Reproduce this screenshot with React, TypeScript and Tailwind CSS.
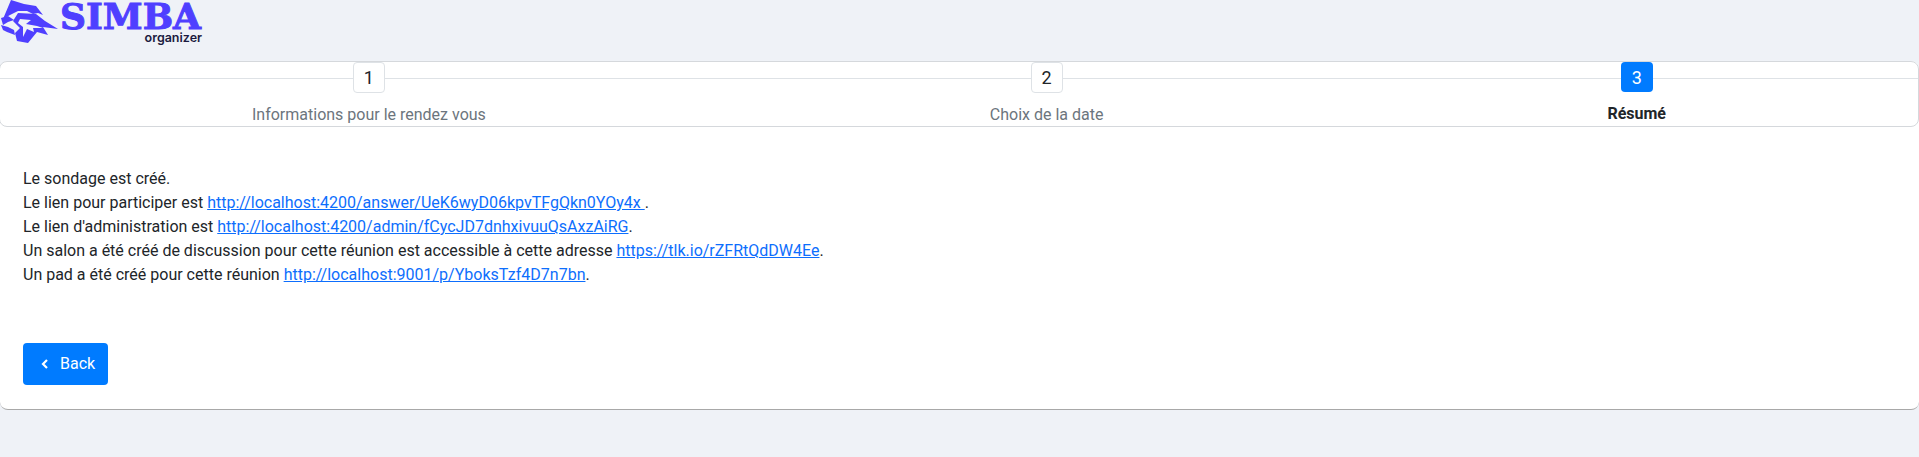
const Lion = () => (
  <svg width="60" height="44" viewBox="0 0 60 44" className="shrink-0">
    <path fill="#4f3fff" d="M11 0 L24 4 L36 6 L43 15 L38 13 L33 14 L27 11 L18 11 L10 15 L3 19 Z" />
    <path
      fill="#4f3fff"
      d="M18 13 L36 14 L45 21 L58 29 L43 27 L48 35 L37 32 L28 43 L17 41 L15 33 L20 28 L13 21 Z"
    />
    <path fill="#eff2f7" d="M20 19 L31 20 L26 24 L37 26 L43 28 L33 28 L34 32 L27 29 L23 37 L23 27 L18 23 Z" />
    <path fill="#4f3fff" d="M1 18 L8 16 L14 20 L8 22 L3 25 Z" />
    <path fill="#4f3fff" d="M1 25 L8 27 L14 30 L15 35 L7 32 L3 30 Z" />
  </svg>
);

const Logo = () => (
  <div className="flex h-[43px] mb-[18px]">
    <Lion />
    <div className="ml-[2px] flex flex-col items-end w-[140px]">
      <div className="pr-px font-['DejaVu_Serif',serif] font-bold text-[36px] leading-[32px] [-webkit-text-stroke:1px_#4f3fff] text-[#4f3fff]">SIMBA</div>
      <div className="font-['Inter',sans-serif] font-semibold text-[12.5px] leading-[11px] text-[#1b1b3f]">organizer</div>
    </div>
  </div>
);

const steps = [
  { n: 1, label: "Informations pour le rendez vous" },
  { n: 2, label: "Choix de la date" },
  { n: 3, label: "Résumé", active: true },
];

const Link = ({ children }: { children: string }) => (
  <a href="#" className="text-[#0d6efd] underline">{children}</a>
);

export default function App() {
  return (
    <div className="h-[457px] bg-[#eff2f7] font-['Roboto',sans-serif] text-base text-[#212529] overflow-hidden">
      <Logo />
      <div className="bg-white rounded-lg border-b border-[#a8a8a8] h-[349px]">
        {/* steps */}
        <div className="relative -ml-px flex justify-around h-[66px] border border-[#d5d8dc] rounded-lg">
          <div className="absolute left-0 right-0 top-[16px] border-t border-[#dee2e6]" />
          {steps.map((s) => (
            <div key={s.n} className="relative flex flex-col items-center">
              <div
                className={
                  s.active
                    ? "w-8 h-8 pt-px flex items-center justify-center rounded bg-[#007bff] text-white text-lg"
                    : "w-8 h-8 pt-px flex items-center justify-center rounded border border-[#dee2e6] bg-white text-lg"
                }
              >
                {s.n}
              </div>
              <div className={s.active ? "mt-[10px] leading-[24px] font-bold text-[#212529]" : "mt-[10px] leading-[24px] text-[#6c757d]"}>
                {s.label}
              </div>
            </div>
          ))}
        </div>

        <div className="px-[23px] pt-[40px]">
          <div className="leading-6">
            <div>Le sondage est créé.</div>
            <div>Le lien pour participer est <Link>http://localhost:4200/answer/UeK6wyD06kpvTFgQkn0YOy4x </Link> .</div>
            <div>Le lien d'administration est <Link>http://localhost:4200/admin/fCycJD7dnhxivuuQsAxzAiRG</Link>.</div>
            <div>Un salon a été créé de discussion pour cette réunion est accessible à cette adresse <Link>https://tlk.io/rZFRtQdDW4Ee</Link>.</div>
            <div>Un pad a été créé pour cette réunion <Link>http://localhost:9001/p/YboksTzf4D7n7bn</Link>.</div>
          </div>
          <button className="mt-[56px] h-[42px] w-[85px] pl-[18px] flex items-center gap-[11px] rounded bg-[#007bff] text-white">
            <svg width="8" height="12" viewBox="0 0 8 12" fill="none" stroke="white" strokeWidth="2.2">
              <path d="M6 2 L2 6 L6 10" />
            </svg>
            Back
          </button>
        </div>
      </div>
    </div>
  );
}
